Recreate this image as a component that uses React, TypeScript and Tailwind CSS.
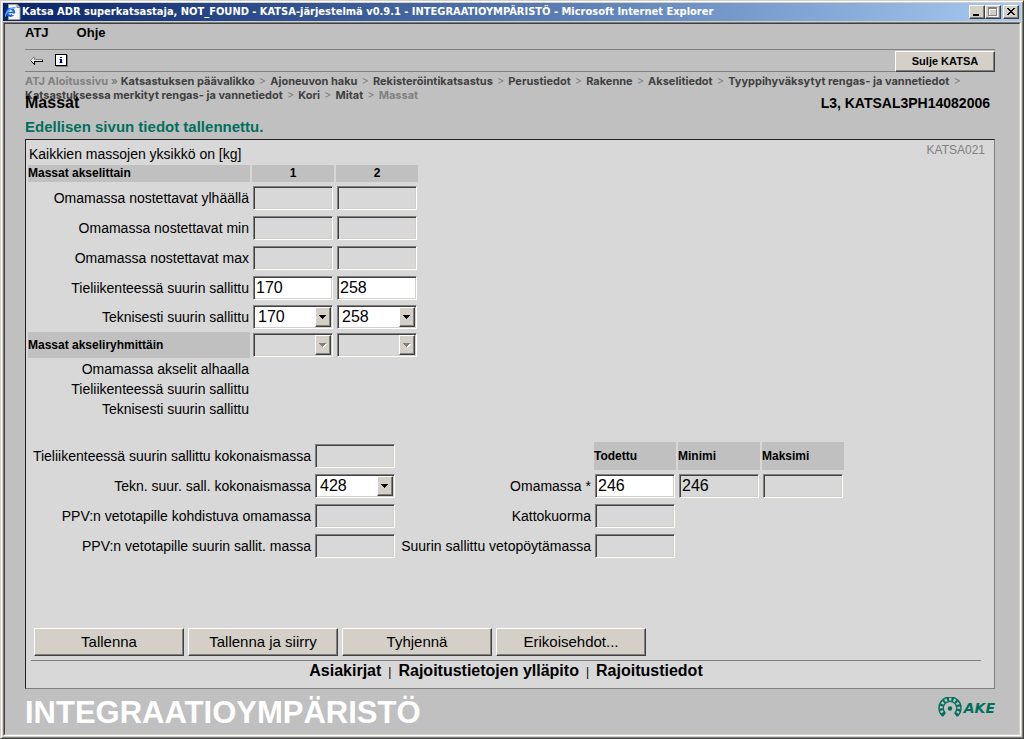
import type { ReactNode } from "react";

const sunken =
  "block h-6 w-20 rounded-none border border-t-[#808080] border-l-[#808080] border-b-white border-r-white shadow-[inset_1px_1px_0_#404040,inset_-1px_-1px_0_#d4d0c8] text-[16px] leading-5 text-black outline-none";
const raised =
  "border border-t-white border-l-white border-b-[#404040] border-r-[#404040] bg-[#d4d0c8] text-black shadow-[inset_-1px_-1px_0_#808080]";

type FieldProps = { id?: string; label?: string; value?: string; readOnly?: boolean };

function Field({ id, label, value = "", readOnly = false }: FieldProps) {
  return (
    <input
      id={id}
      aria-label={label}
      type="text"
      defaultValue={value}
      readOnly={readOnly}
      className={`${sunken} px-[2px] ${readOnly ? "bg-[#d8d8d8]" : "bg-white"}`}
    />
  );
}

function Dropdown({ id, label, value = "", disabled = false }: FieldProps & { disabled?: boolean }) {
  return (
    <div className="relative w-20">
      <select
        id={id}
        aria-label={label}
        defaultValue={value}
        disabled={disabled}
        className={`${sunken} appearance-none pr-4 pl-1 opacity-100 ${disabled ? "bg-[#d8d8d8]" : "bg-white"}`}
      >
        <option value={value}>{value}</option>
      </select>
      <span
        className={`${raised} pointer-events-none absolute top-[2px] right-[2px] flex h-5 w-4 items-center justify-center`}
      >
        <svg width="8" height="5" viewBox="0 0 8 5" shapeRendering="crispEdges">
          {disabled && <path d="M1 1h7v1h-1v1h-1v1h-1v1h-1v-1h-1v-1h-1v-1h-1z" fill="#fff" />}
          <path d="M0 0h7v1h-1v1h-1v1h-1v1h-1v-1h-1v-1h-1v-1h-1z" fill={disabled ? "#808080" : "#000"} />
        </svg>
      </span>
    </div>
  );
}

function TitleButton({ label, children }: { label: string; children: ReactNode }) {
  return (
    <button aria-label={label} className={`${raised} flex h-[14px] w-4 items-center justify-center`}>
      <svg width="10" height="10" viewBox="0 0 10 10" shapeRendering="crispEdges">
        {children}
      </svg>
    </button>
  );
}

function TitleBar() {
  return (
    <div className="flex h-[18px] items-center bg-linear-to-r from-[#0a246a] to-[#a6caf0] px-[2px]">
      <svg width="16" height="16" viewBox="0 0 16 16" className="shrink-0">
        <path d="M3.500 .5h8.500l3 3v12h-11.500z" fill="#f4f4f4" stroke="#a0a0a0" />
        <path d="M12 .5v3h3" fill="#d4d0c8" stroke="#808080" />
        <circle cx="5.500" cy="8.300" r="3.500" fill="#fff" stroke="#1560d8" strokeWidth="2.200" />
        <path d="M2.500 8.500h6.500" stroke="#1560d8" strokeWidth="1.600" />
        <path d="M7 10.300h3.500" stroke="#f4f4f4" strokeWidth="1.600" />
        <path d="M.7 12.500C0 9 5 3.500 10.500 3.500" fill="none" stroke="#5fa8ff" strokeWidth="1.300" />
      </svg>
      <h1 className="flex-1 truncate pt-px pl-px font-['DejaVu_Sans_Condensed','DejaVu_Sans',sans-serif] text-[11px] font-bold text-white">
        Katsa ADR superkatsastaja, NOT_FOUND - KATSA-järjestelmä v0.9.1 - INTEGRAATIOYMPÄRISTÖ - Microsoft Internet
        Explorer
      </h1>
      <div className="flex">
        <TitleButton label="Minimize">
          <path d="M1 7h6v2h-6z" fill="#000" />
        </TitleButton>
        <TitleButton label="Maximize">
          <path d="M1 1h9v9h-9zM2 3v6h7v-6z" fill="#fff" fillRule="evenodd" />
          <path d="M0 0h9v9h-9zM1 2v6h7v-6z" fill="#808080" fillRule="evenodd" />
        </TitleButton>
        <div className="ml-[2px]">
          <TitleButton label="Close">
            <path
              d="M1 1h2v1h1v1h2v-1h1v-1h2v1h-1v1h-1v1h-1v1h1v1h1v1h1v1h-2v-1h-1v-1h-2v1h-1v1h-2v-1h1v-1h1v-1h1v-1h-1v-1h-1v-1h-1z"
              fill="#000"
            />
          </TitleButton>
        </div>
      </div>
    </div>
  );
}

const crumbs = [
  "Katsastuksen päävalikko",
  "Ajoneuvon haku",
  "Rekisteröintikatsastus",
  "Perustiedot",
  "Rakenne",
  "Akselitiedot",
  "Tyyppihyväksytyt rengas- ja vannetiedot",
  "Katsastuksessa merkityt rengas- ja vannetiedot",
  "Kori",
  "Mitat",
];

function Breadcrumb() {
  return (
    <nav className="h-[22px] pt-[2px] font-[Inter,'Liberation_Sans',sans-serif] text-[11px] leading-[14px] font-bold text-[#404040]">
      <a href="#" className="text-[#808080]">
        ATJ Aloitussivu
      </a>
      <span className="text-[#808080]"> » </span>
      {crumbs.map((crumb) => (
        <span key={crumb}>
          <a href="#">{crumb}</a>
          <span className="px-px font-normal text-[#808080]"> &gt; </span>
          {crumb.startsWith("Tyyppi") && <br />}
        </span>
      ))}
      <span className="text-[#808080]">Massat</span>
    </nav>
  );
}

const axleRows = [
  { id: "ylhaalla", label: "Omamassa nostettavat ylhäällä", values: ["", ""] },
  { id: "min", label: "Omamassa nostettavat min", values: ["", ""] },
  { id: "max", label: "Omamassa nostettavat max", values: ["", ""] },
  { id: "tieliikenne", label: "Tieliikenteessä suurin sallittu", values: ["170", "258"] },
];

const groupRows = ["Omamassa akselit alhaalla", "Tieliikenteessä suurin sallittu", "Teknisesti suurin sallittu"];

function AxleTable() {
  return (
    <table className="w-[394px] table-fixed border-separate border-spacing-[2px] text-right">
      <colgroup>
        <col className="w-[222px]" />
        <col className="w-[82px]" />
        <col className="w-[82px]" />
      </colgroup>
      <thead>
        <tr className="h-[17px] text-[12px] leading-[17px]">
          <th className="bg-[#c0c0c0] p-0 text-left">Massat akselittain</th>
          <th className="bg-[#c0c0c0] p-0 text-center">1</th>
          <th className="bg-[#c0c0c0] p-0 text-center">2</th>
        </tr>
      </thead>
      <tbody>
        {axleRows.map((row) => (
          <tr key={row.id} className="h-7">
            <td className="p-px">
              <label htmlFor={row.id}>{row.label}</label>
            </td>
            {row.values.map((value, i) => (
              <td key={i} className="p-px">
                <Field
                  id={i === 0 ? row.id : undefined}
                  label={`${row.label} ${i + 1}`}
                  value={value}
                  readOnly={value === ""}
                />
              </td>
            ))}
          </tr>
        ))}
        <tr className="h-[26px]">
          <td className="p-px">
            <label htmlFor="tekninen">Teknisesti suurin sallittu</label>
          </td>
          <td className="p-px">
            <Dropdown id="tekninen" value="170" />
          </td>
          <td className="p-px">
            <Dropdown label="Teknisesti suurin sallittu 2" value="258" />
          </td>
        </tr>
        <tr className="h-[26px]">
          <th className="bg-[#c0c0c0] p-0 text-left text-[12px]">Massat akseliryhmittäin</th>
          <td className="p-px">
            <Dropdown label="Akseliryhmä 1" disabled />
          </td>
          <td className="p-px">
            <Dropdown label="Akseliryhmä 2" disabled />
          </td>
        </tr>
        {groupRows.map((label) => (
          <tr key={label} className="h-[18px] leading-4">
            <td className="p-px">{label}</td>
          </tr>
        ))}
      </tbody>
    </table>
  );
}

function TotalsTable() {
  return (
    <table className="mt-5 w-[820px] table-fixed border-separate border-spacing-[2px] text-right whitespace-nowrap">
      <colgroup>
        <col className="w-[284px]" />
        <col className="w-[82px]" />
        <col className="w-[194px]" />
        <col className="w-[82px]" />
        <col className="w-[82px]" />
        <col className="w-[82px]" />
      </colgroup>
      <tbody>
        <tr className="h-7">
          <td className="p-px">
            <label htmlFor="kokonaismassa">Tieliikenteessä suurin sallittu kokonaismassa</label>
          </td>
          <td className="p-px">
            <Field id="kokonaismassa" readOnly />
          </td>
          <td />
          <th className="bg-[#c0c0c0] p-0 text-left text-[12px]">Todettu</th>
          <th className="bg-[#c0c0c0] p-0 text-left text-[12px]">Minimi</th>
          <th className="bg-[#c0c0c0] p-0 text-left text-[12px]">Maksimi</th>
        </tr>
        <tr className="h-7">
          <td className="p-px">
            <label htmlFor="tekn-kokonaismassa">Tekn. suur. sall. kokonaismassa</label>
          </td>
          <td className="p-px">
            <Dropdown id="tekn-kokonaismassa" value="428" />
          </td>
          <td className="p-px">
            <label htmlFor="omamassa">Omamassa *</label>
          </td>
          <td className="p-px">
            <Field id="omamassa" value="246" />
          </td>
          <td className="p-px">
            <Field label="Omamassa minimi" value="246" readOnly />
          </td>
          <td className="p-px">
            <Field label="Omamassa maksimi" readOnly />
          </td>
        </tr>
        <tr className="h-7">
          <td className="p-px">
            <label htmlFor="ppv-omamassa">PPV:n vetotapille kohdistuva omamassa</label>
          </td>
          <td className="p-px">
            <Field id="ppv-omamassa" readOnly />
          </td>
          <td className="p-px">
            <label htmlFor="kattokuorma">Kattokuorma</label>
          </td>
          <td className="p-px">
            <Field id="kattokuorma" readOnly />
          </td>
        </tr>
        <tr className="h-7">
          <td className="p-px">
            <label htmlFor="ppv-suurin">PPV:n vetotapille suurin sallit. massa</label>
          </td>
          <td className="p-px">
            <Field id="ppv-suurin" readOnly />
          </td>
          <td className="p-px">
            <label htmlFor="vetopoyta">Suurin sallittu vetopöytämassa</label>
          </td>
          <td className="p-px">
            <Field id="vetopoyta" readOnly />
          </td>
        </tr>
      </tbody>
    </table>
  );
}

function AkeLogo() {
  return (
    <div className="flex items-center gap-px pt-[2px] text-[#00705c]">
      <svg width="25" height="21" viewBox="0 0 25 21" fill="none" stroke="currentColor">
        <path d="M4.500 19A11 11 0 1 1 19.500 19" strokeWidth="1.400" />
        <path d="M7 15.800A6.800 6.800 0 1 1 17 15.800" strokeWidth="1.300" />
        <path d="M5.800 17.300A8.800 8.800 0 1 1 18.200 17.300" strokeWidth="3.400" strokeDasharray="2.200 2.200" />
        <path d="M7.200 15.500l-2.800 3.800M16.800 15.500l2.800 3.800" strokeWidth="1.800" />
        <circle cx="12" cy="11.500" r="2.200" fill="currentColor" stroke="none" />
      </svg>
      <span className="font-['DejaVu_Sans',sans-serif] text-[14px] leading-4 font-bold italic">AKE</span>
    </div>
  );
}

export default function App() {
  return (
    <div className="flex min-h-screen flex-col border border-t-[#d4d0c8] border-l-[#d4d0c8] border-r-[#404040] border-b-[#404040] bg-[#d4d0c8] p-[2px] font-['Liberation_Sans',Arial,sans-serif] text-[14px] text-black shadow-[inset_1px_1px_0_#fff,inset_-1px_-1px_0_#808080]">
      <TitleBar />
      <div className="mt-px flex flex-1 flex-col border border-t-[#808080] border-l-[#808080] border-r-white border-b-white">
        <div className="flex flex-1 flex-col border border-t-[#404040] border-l-[#404040] border-r-[#d4d0c8] border-b-[#d4d0c8] bg-[#c0c0c0] pr-6 pl-5">
          <nav className="flex h-[25px] gap-7 text-[13px] leading-[17px] font-bold">
            <a href="#">ATJ</a>
            <a href="#">Ohje</a>
          </nav>

          <div className="flex h-[23px] items-center border-y border-[#808080]">
            <button aria-label="Takaisin" className="ml-1">
              <svg width="16" height="12" viewBox="0 0 16 12" shapeRendering="crispEdges">
                <path d="M1 5h1v-1h1v-1h1v-1h2v2h8v3h-8v3h-1v-1h-1v-1h-1v-1h-1v-1h-1z" fill="#000" />
                <path d="M2 5h1v-1h1v-1h1v2h8v1h-8v2h-1v-1h-1v-1h-1z" fill="#e8e8e8" />
                <path d="M1 5h1v-1h1v-1h1v-1h2v2h8v1h-9v-2h-1v1h-1v1h-1v1h-1z" fill="#808080" />
              </svg>
            </button>
            <button aria-label="Info" className="ml-[10px]">
              <svg width="13" height="13" viewBox="0 0 13 13" shapeRendering="crispEdges">
                <path d="M1 1h12v12h-12z" fill="#808080" />
                <path d="M0 0h12v12h-12z" fill="#000" />
                <path d="M1 1h10v10h-10z" fill="#fff" />
                <path d="M5 3h2v1h-2zM5 5h2v4h-2z" fill="#000080" />
                <path d="M4 5h1v1h-1zM4 8h1v1h-1zM7 8h1v1h-1z" fill="#8080c0" />
              </svg>
            </button>
            <button className={`${raised} mt-[2px] ml-auto h-[21px] w-[100px] text-[11px] font-bold`}>Sulje KATSA</button>
          </div>

          <Breadcrumb />

          <div className="flex justify-between pr-[5px] leading-[18px] font-bold">
            <h2 className="text-[16px]">Massat</h2>
            <div>L3, KATSAL3PH14082006</div>
          </div>
          <p className="mt-[5px] text-[15px] leading-5 font-bold text-[#00705c]">
            Edellisen sivun tiedot tallennettu.
          </p>

          <main className="mt-[2px] flex flex-1 flex-col border border-t-[#202020] border-l-[#202020] border-r-[#808080] border-b-[#808080] bg-[#d8d8d8]">
            <div className="flex justify-between pr-[9px] pl-[3px]">
              <p className="pt-[5px] leading-[18px]">Kaikkien massojen yksikkö on [kg]</p>
              <p className="text-[12px] leading-5 text-[#808080]">KATSA021</p>
            </div>
            <AxleTable />
            <TotalsTable />

            <div className="mt-auto flex gap-1 pl-2 text-[15px]">
              {["Tallenna", "Tallenna ja siirry", "Tyhjennä", "Erikoisehdot..."].map((label) => (
                <button key={label} className={`${raised} h-7 w-[150px]`}>
                  {label}
                </button>
              ))}
            </div>
            <nav className="mr-[13px] ml-[5px] mt-1 h-7 border-t border-[#808080] text-center text-[16px] leading-5">
              <a href="#" className="font-bold">
                Asiakirjat
              </a>
              <span className="px-[7px] text-[12px]">|</span>
              <a href="#" className="font-bold">
                Rajoitustietojen ylläpito
              </a>
              <span className="px-[7px] text-[12px]">|</span>
              <a href="#" className="font-bold">
                Rajoitustiedot
              </a>
            </nav>
          </main>

          <footer className="flex h-[45px] items-start justify-between pt-[6px]">
            <div className="text-[31px] leading-9 font-bold text-white">INTEGRAATIOYMPÄRISTÖ</div>
            <AkeLogo />
          </footer>
        </div>
      </div>
    </div>
  );
}
